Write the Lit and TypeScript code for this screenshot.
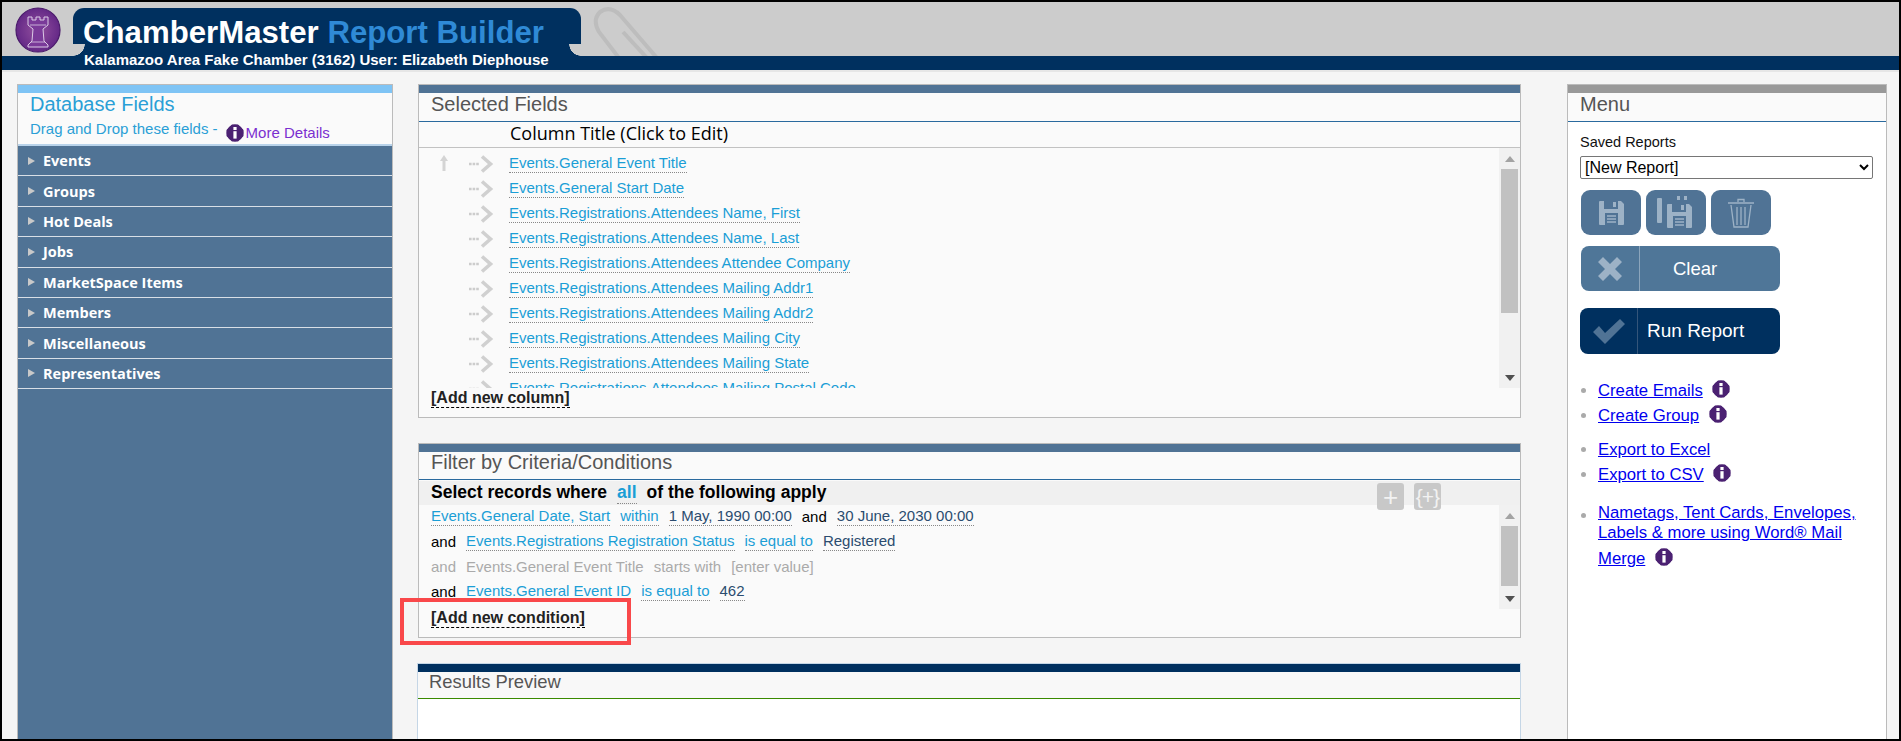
import { LitElement, html, css, svg } from "lit";
import { customElement } from "lit/decorators.js";

const info = (cls = "") => html`<svg class="info ${cls}" viewBox="0 0 18 18" width="18" height="18"><path d="M6 0.5h6l5.5 5.5v6L12 17.5H6L0.5 12V6z" fill="#4b2172"/><circle cx="9" cy="9" r="8.4" fill="#4b2172"/><rect x="7.4" y="3" width="3.2" height="3" fill="#fff"/><rect x="7.4" y="7.2" width="3.2" height="7.4" fill="#fff"/></svg>`;

const arrow = html`<svg class="arrow" viewBox="0 0 25 18" width="25" height="18"><path d="M0 9h2.6M3.6 9h2.6M7.2 9h2.6" stroke="#ccc" stroke-width="2.6" fill="none"/><path d="M13 1.5l8.5 7.5-8.5 7.5" stroke="#d0d0d0" stroke-width="3.6" fill="none"/></svg>`;

const floppyPath = svg`<path d="M2 1h21l3 3v20a1 1 0 0 1-1 1H2a1 1 0 0 1-1-1V2a1 1 0 0 1 1-1z" fill="#9db2c6"/><rect x="6" y="1" width="14" height="8" fill="#507395"/><rect x="15" y="2" width="3" height="5" fill="#9db2c6"/><rect x="7" y="13" width="13" height="12" fill="#507395"/><path d="M9 16h9M9 19h9M9 22h9" stroke="#9db2c6" stroke-width="1.5"/>`;

const fields = ["Events","Groups","Hot Deals","Jobs","MarketSpace Items","Members","Miscellaneous","Representatives"];
const cols = ["Events.General Event Title","Events.General Start Date","Events.Registrations.Attendees Name, First","Events.Registrations.Attendees Name, Last","Events.Registrations.Attendees Attendee Company","Events.Registrations.Attendees Mailing Addr1","Events.Registrations.Attendees Mailing Addr2","Events.Registrations.Attendees Mailing City","Events.Registrations.Attendees Mailing State","Events.Registrations.Attendees Mailing Postal Code"];

@customElement("app-root")
export class AppRoot extends LitElement {
  static styles = css`
    :host { display: block; position: relative; height: 741px; box-sizing: border-box; border: 2px solid #000; overflow: hidden; background: #f5f5f5; font-family: "Liberation Sans", Arial, sans-serif; font-size: 15px; }
    * { box-sizing: border-box; }
    .head { background: #ccc; height: 68px; display: flex; flex-direction: column; position: relative; overflow: hidden; }
    .headTop { height: 54px; display: flex; align-items: flex-start; padding: 5px 0 0 13px; }
    .logo { width: 46px; height: 46px; flex: none; }
    .tab { margin: 1px 0 0 12px; width: 508px; height: 48px; background: #00305f; border-radius: 11px 11px 0 0; padding: 7px 0 0 10px; font-weight: bold; font-size: 31.2px; line-height: 36px; color: #fff; white-space: nowrap; position: relative; }
    .tab::before, .tab::after { content: ""; position: absolute; bottom: 0; width: 12px; height: 12px; }
    .tab::before { left: 0; background: radial-gradient(circle at 0 0, #ccc 11.5px, #00305f 12px); }
    .tab::after { right: 0; background: radial-gradient(circle at 100% 0, #ccc 11.5px, #00305f 12px); }
    .tab b { color: #2f8ad6; }
    .strip { position: relative; z-index: 1; height: 14px; background: #00305f; color: #fff; font-weight: bold; font-size: 15px; line-height: 8px; padding-left: 82px; white-space: nowrap; }
    .clip { position: absolute; left: 588px; top: 0; }
    .seam { height: 2px; background: #e6e6e6; }
    .main { display: flex; align-items: flex-start; padding: 12px 0 0 15px; height: 667px; overflow: hidden; }

    .panel { border: 1px solid #bbb; background: #fafafa; position: relative; }
    .bar { height: 8px; background: #507395; }
    .ttl { height: 28px; padding-left: 12px; font-size: 20px; line-height: 22px; color: #555; }
    .ttl.f { height: 27px; line-height: 21px; }
    .rule { height: 1px; margin-bottom: 1px; background: #2a6a9e; }

    .left { width: 376px; height: 680px; flex: none; background: #507395; }
    .left .bar { background: #7fc4f5; }
    .intro { height: 53px; background: #fafafa; padding-left: 12px; color: #2a9fd6; border-bottom: 2px solid #b9d3ea; }
    .intro h2 { margin: 0; font-weight: normal; font-size: 20px; line-height: 23px; color: #2a9fd6; }
    .dd { display: flex; font-size: 15px; line-height: 18px; margin-top: 4px; white-space: nowrap; }
    .dd .info { margin: 4px 2px 0 8px; flex: none; }
    .dd span.more { color: #7a2fd0; margin-top: 4px; }
    .row { height: 30.4px; border-bottom: 1.5px solid #d8dfe6; color: #fff; font-family: "Open Sans", sans-serif; font-weight: 700; font-size: 14.5px; line-height: 27px; display: flex; align-items: center; padding-left: 10px; gap: 8px; }
    .tri { width: 0; height: 0; border-left: 7px solid #c9c9c9; border-top: 4.5px solid transparent; border-bottom: 4.5px solid transparent; }

    .mid { width: 1103px; flex: none; margin-left: 25px; display: flex; flex-direction: column; }
    .coltitle { height: 25px; padding-left: 91px; font-family: "Open Sans", sans-serif; font-size: 18px; line-height: 21px; color: #000; border-bottom: 1px solid #c2c2c2; white-space: nowrap; }
    .listWrap { display: flex; height: 240px; }
    .list { flex: 1; overflow: hidden; padding-top: 3px; }
    .lrow { height: 25px; display: flex; align-items: center; position: relative; padding-left: 50px; }
    .lrow .arrow { flex: none; }
    .up { position: absolute; left: 20px; top: 4px; }
    .lnk { margin-left: 15px; color: #1a9ed6; line-height: 18px; border-bottom: 1px dotted #888; white-space: nowrap; }
    .scroll { width: 21px; flex: none; background: #f1f1f1; padding: 0 2px; display: flex; flex-direction: column; align-items: stretch; }
    .sbtn { height: 21px; display: flex; align-items: center; justify-content: center; flex: none; }
    .thumb { background: #c1c1c1; flex: none; }
    .spacer { flex: 1; }
    .add { display: inline-block; font-weight: bold; color: #222; font-size: 16px; line-height: 18px; border-bottom: 1px dashed #000; }
    .addrow1 { height: 29px; padding: 1px 0 0 12px; }
    .gap { height: 25px; flex: none; }

    .selrow { height: 24px; background: #f0f0f0; padding-left: 12px; font-weight: bold; font-size: 17.5px; line-height: 23px; color: #000; display: flex; gap: 10px; white-space: nowrap; }
    .selrow a { color: #1a9ed6; border-bottom: 1px dotted #888; height: 23px; }
    .tools { position: absolute; left: 958px; top: 39px; display: flex; gap: 10px; z-index: 1; }
    .tool { width: 27px; height: 27px; border-radius: 3px; background: #c8c8c8; color: #f2f2f2; display: flex; align-items: center; justify-content: center; font-size: 21px; letter-spacing: -1px; line-height: 1; white-space: nowrap; }
    .tool.plus { font-size: 26px; letter-spacing: 0; }
    .fwrap { display: flex; height: 104px; }
    .frows { flex: 1; padding: 0 0 0 12px; margin-top: -1px; }
    .frow { height: 25px; display: flex; gap: 10px; align-items: center; white-space: nowrap; color: #000; font-size: 15px; }
    .frow a { color: #1a9ed6; line-height: 18px; border-bottom: 1px dotted #888; }
    .frow a.v { color: #2b4c6f; }
    .frow.off span { color: #aaa; }
    .addrow2 { height: 28px; padding: 0 0 0 12px; }
    .res { background: #fff; border: 1px solid #c5d6e6; border-bottom: 0; margin-left: -1px; height: 90px; }
    .res .bar { background: #00305f; }
    .res .ttlw { background: #f8f8f8; height: 26px; padding-left: 11px; font-size: 18.4px; line-height: 19px; color: #555; }
    .res .rule { background: #3a8a00; }

    .right { width: 320px; flex: none; margin-left: 46px; background: #fff; height: 680px; border-bottom: 0; }
    .right .bar { background: #999; }
    .right .ttl { background: #fafafa; }
    .body { padding: 11px 13px 0 12px; }
    .lbl { font-size: 14.5px; line-height: 17px; color: #111; }
    select { display: block; width: 293px; height: 23px; margin-top: 5px; font: 16px "Liberation Sans", Arial, sans-serif; color: #000; background: #fff; border: 1px solid #767676; border-radius: 2px; padding: 0; }
    .ibtns { display: flex; gap: 5px; margin: 11px 0 0 1px; }
    .ib { width: 60px; height: 45px; background: #507395; border-radius: 9px; display: flex; align-items: center; justify-content: center; }
    .big { display: flex; width: 199px; height: 45px; margin: 11px 0 0 1px; background: #4f7698; border-radius: 8px; color: #fff; font-size: 18.5px; }
    .big .ic { width: 59px; flex: none; border-right: 1px solid #8ba5bc; display: flex; align-items: center; justify-content: center; }
    .big .tx { flex: 1; display: flex; align-items: center; padding-left: 33px; }
    .big.run { width: 200px; height: 46px; margin: 17px 0 0; background: #00305f; font-size: 19px; }
    .big.run .ic { border-right-color: #34557a; width: 58px; }
    .big.run .tx { padding-left: 9px; }
    ul { list-style: none; margin: 0; padding: 0 0 0 18px; }
    li { position: relative; color: #00e; font-size: 16.7px; line-height: 25px; min-height: 25px; }
    li::before { content: ""; position: absolute; left: -17px; top: 10px; width: 5px; height: 5px; border-radius: 50%; background: #aaa; }
    li a { color: #0000ee; text-decoration: underline; }
    li .info { vertical-align: -2px; margin-left: 5px; }
    .l1 { margin-top: 24px; }
    .l2 { margin-top: 9px; }
    .l3 { margin-top: 16px; }
    .l3 li { line-height: 20px; }
    .l3 .last { display: inline-block; line-height: 32px; }

    .mark { position: absolute; left: 398px; top: 596px; width: 231px; height: 47px; border: 4.5px solid #f9484a; pointer-events: none; }
  `;

  render() {
    return html`
      <div class="head">
        <svg class="clip" width="80" height="54" viewBox="0 0 80 54"><g fill="none" stroke="#bdbdbd" stroke-width="4"><path d="M67 56L30 13Q20 3 10 10Q2 18 9 30L29 56"/><path d="M33 30L57 56"/></g></svg>
        <div class="headTop">
          <svg class="logo" viewBox="0 0 46 46">
            <defs><radialGradient id="lg" cx="50%" cy="50%" r="55%"><stop offset="0" stop-color="#94519f"/><stop offset="1" stop-color="#5f2484"/></radialGradient></defs>
            <circle cx="23" cy="23" r="22" fill="url(#lg)" stroke="#4a1a6b" stroke-width="1.2"/>
            <path d="M13 10h4v3h4v-3h4v3h4v-3h4v8l-5 4 1 12 4 4v2H13v-2l4-4 1-12-5-4z" fill="#7a3a99" stroke="#dccbe6" stroke-width="1"/>
            <path d="M15 18h16M16 35h14" stroke="#dccbe6" stroke-width="0.8"/>
          </svg>
          <div class="tab">ChamberMaster <b>Report Builder</b></div>
        </div>
        <div class="strip">Kalamazoo Area Fake Chamber (3162) User: Elizabeth Diephouse</div>
      </div>
      <div class="seam"></div>
      <div class="main">
        <div class="panel left">
          <div class="bar"></div>
          <div class="intro">
            <h2>Database Fields</h2>
            <div class="dd"><span>Drag and Drop these fields -</span>${info()}<span class="more">More Details</span></div>
          </div>
          ${fields.map((f) => html`<div class="row"><span class="tri"></span>${f}</div>`)}
        </div>

        <div class="mid">
          <div class="panel">
            <div class="bar"></div>
            <div class="ttl">Selected Fields</div>
            <div class="rule"></div>
            <div class="coltitle">Column Title (Click to Edit)</div>
            <div class="listWrap">
              <div class="list">
                ${cols.map((c, i) => html`<div class="lrow">
                  ${i === 0 ? html`<svg class="up" width="10" height="16" viewBox="0 0 10 16"><path d="M5 0L9 6H6.5V16H3.5V6H1z" fill="#d4d4d4"/></svg>` : ""}
                  ${arrow}<span class="lnk">${c}</span></div>`)}
              </div>
              <div class="scroll">
                <div class="sbtn"><svg width="10" height="6"><path d="M5 0l5 6H0z" fill="#a3a3a3"/></svg></div>
                <div class="thumb" style="height:144px"></div>
                <div class="spacer"></div>
                <div class="sbtn"><svg width="10" height="6"><path d="M0 0h10L5 6z" fill="#505050"/></svg></div>
              </div>
            </div>
            <div class="addrow1"><span class="add">[Add new column]</span></div>
          </div>
          <div class="gap"></div>
          <div class="panel">
            <div class="bar"></div>
            <div class="ttl f">Filter by Criteria/Conditions</div>
            <div class="rule"></div>
            <div class="selrow"><span>Select records where</span><a>all</a><span>of the following apply</span></div>
            <div class="tools">
              <div class="tool plus">+</div><div class="tool">{+}</div>
            </div>
            <div class="fwrap">
              <div class="frows">
                <div class="frow"><a>Events.General Date, Start</a><a>within</a><a class="v">1 May, 1990 00:00</a><span>and</span><a class="v">30 June, 2030 00:00</a></div>
                <div class="frow"><span>and</span><a>Events.Registrations Registration Status</a><a>is equal to</a><a class="v">Registered</a></div>
                <div class="frow off"><span>and</span><span>Events.General Event Title</span><span>starts with</span><span>[enter value]</span></div>
                <div class="frow"><span>and</span><a>Events.General Event ID</a><a>is equal to</a><a class="v">462</a></div>
              </div>
              <div class="scroll">
                <div class="sbtn"><svg width="10" height="6"><path d="M5 0l5 6H0z" fill="#a3a3a3"/></svg></div>
                <div class="thumb" style="height:60px"></div>
                <div class="spacer"></div>
                <div class="sbtn"><svg width="10" height="6"><path d="M0 0h10L5 6z" fill="#505050"/></svg></div>
              </div>
            </div>
            <div class="addrow2"><span class="add">[Add new condition]</span></div>
          </div>
          <div class="gap"></div>
          <div class="res">
            <div class="bar"></div>
            <div class="ttlw">Results Preview</div>
            <div class="rule"></div>
          </div>
        </div>

        <div class="panel right">
          <div class="bar"></div>
          <div class="ttl">Menu</div>
          <div class="rule"></div>
          <div class="body">
            <div class="lbl">Saved Reports</div>
            <select><option>[New Report]</option></select>
            <div class="ibtns">
              <div class="ib"><svg width="27" height="26" viewBox="0 0 27 26">${floppyPath}</svg></div>
              <div class="ib"><svg width="38" height="34" viewBox="0 0 38 34"><rect x="0" y="2" width="5" height="25" rx="1" fill="#9db2c6"/><rect x="20" y="0" width="3" height="4" fill="#9db2c6"/><rect x="27" y="0" width="3" height="4" fill="#9db2c6"/><g transform="translate(9 7)">${floppyPath}</g></svg></div>
              <div class="ib"><svg width="28" height="30" viewBox="0 0 28 30"><path d="M1 5h26M11 4V1.5h6V4M4 7l3 22h14l3-22" fill="none" stroke="#9db2c6" stroke-width="1.3"/><path d="M10 9v18M14 9v18M18 9v18" stroke="#9db2c6" stroke-width="1.3"/></svg></div>
            </div>
            <div class="big">
              <div class="ic"><svg width="26" height="26" viewBox="0 0 26 26"><path d="M6 1l7 7 7-7 5 5-7 7 7 7-5 5-7-7-7 7-5-5 7-7-7-7z" fill="#9db2c6"/></svg></div>
              <div class="tx">Clear</div>
            </div>
            <div class="big run">
              <div class="ic"><svg width="34" height="26" viewBox="0 0 34 26"><path d="M1 14l6-6 6 7L28 1l5 5-20 20z" fill="#507395"/></svg></div>
              <div class="tx">Run Report</div>
            </div>
            <ul class="l1">
              <li><a>Create Emails</a> ${info()}</li>
              <li><a>Create Group</a> ${info()}</li>
            </ul>
            <ul class="l2">
              <li><a>Export to Excel</a></li>
              <li><a>Export to CSV</a> ${info()}</li>
            </ul>
            <ul class="l3">
              <li><a>Nametags, Tent Cards, Envelopes, Labels &amp; more using Word® Mail</a><br><span class="last"><a>Merge</a> ${info()}</span></li>
            </ul>
          </div>
        </div>
      </div>
      <div class="mark"></div>
    `;
  }
}
